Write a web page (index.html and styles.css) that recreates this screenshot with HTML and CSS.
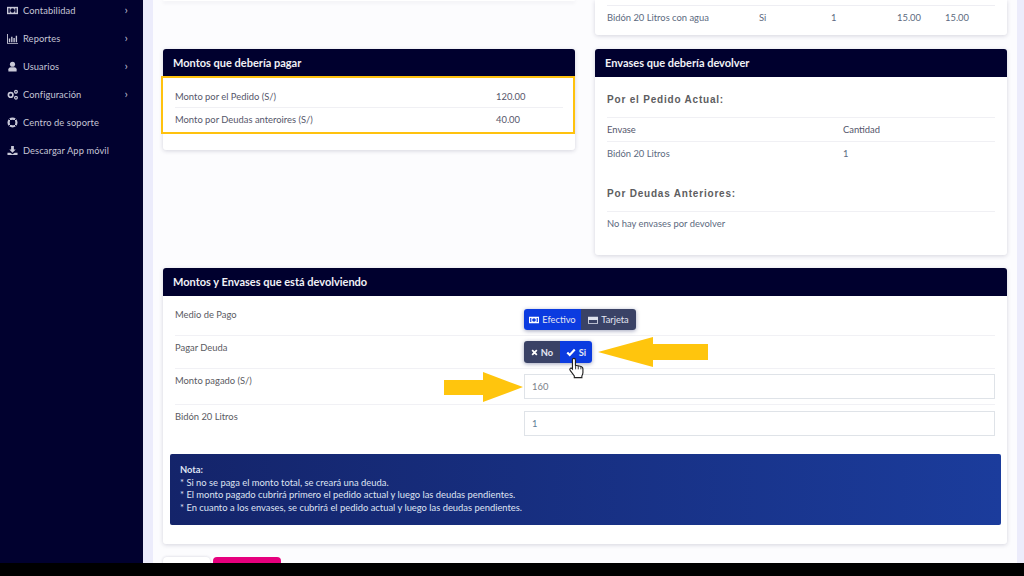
FILE: index.html
```html
<!DOCTYPE html>
<html lang="es">
<head>
<meta charset="utf-8">
<title>Pago de pedido</title>
<link rel="stylesheet" href="styles.css">
</head>
<body>
<div class="screen">
  <aside class="sidebar">
    <a class="nav-item"><svg class="nav-icon" viewBox="0 0 12 12"><path d="M0 2h12v8H0z" fill="#c9c9d8"/><circle cx="6" cy="6" r="2.400" fill="#01012f"/><path d="M1.500 3.500h1.500v5H1.500zM9 3.500h1.500v5H9z" fill="#01012f"/></svg><span class="nav-label">Contabilidad</span><span class="chev">›</span></a>
    <a class="nav-item"><svg class="nav-icon" viewBox="0 0 12 12"><path d="M0 1h1v10h11v.8H0zM2 6h1.500v4H2zM4.500 4h1.500v6H4.500zM7 5.500h1.500V10H7zM9.500 3H11v7H9.500z" fill="#c9c9d8"/></svg><span class="nav-label">Reportes</span><span class="chev">›</span></a>
    <a class="nav-item"><svg class="nav-icon" viewBox="0 0 12 12"><circle cx="6" cy="3.500" r="2.800" fill="#c9c9d8"/><path d="M1.500 11.500V9c0-1.500 1.500-2.300 2.500-2.300h4c1 0 2.500.8 2.500 2.300v2.500z" fill="#c9c9d8"/></svg><span class="nav-label">Usuarios</span><span class="chev">›</span></a>
    <a class="nav-item"><svg class="nav-icon" viewBox="0 0 12 12"><circle cx="4" cy="6.500" r="2.500" fill="none" stroke="#c9c9d8" stroke-width="1.800"/><circle cx="9.800" cy="3" r="1.500" fill="none" stroke="#c9c9d8" stroke-width="1.300"/><circle cx="9.800" cy="9.500" r="1.500" fill="none" stroke="#c9c9d8" stroke-width="1.300"/></svg><span class="nav-label">Configuración</span><span class="chev">›</span></a>
    <a class="nav-item"><svg class="nav-icon" viewBox="0 0 12 12"><circle cx="6" cy="6" r="4.300" fill="none" stroke="#c9c9d8" stroke-width="2.400"/><path d="M0 6h12M6 0v12" stroke="#01012f" stroke-width="1" transform="rotate(45 6 6)"/></svg><span class="nav-label">Centro de soporte</span></a>
    <a class="nav-item"><svg class="nav-icon" viewBox="0 0 12 12"><path d="M4.500 1h3v4h2L6 8.500 2.500 5h2zM.5 8.500h3L6 10l2.500-1.500h3V11H.5z" fill="#c9c9d8"/></svg><span class="nav-label">Descargar App móvil</span></a>
  </aside>

  <main class="content">
    <div class="columns">
      <div class="column">
        <section class="card card-stub"></section>
        <section class="card card-amounts">
          <h2 class="card-title">Montos que debería pagar</h2>
          <div class="amounts">
            <div class="amount-row"><span>Monto por el Pedido (S/)</span><span class="amount-value">120.00</span></div>
            <div class="amount-row"><span>Monto por Deudas anteroires (S/)</span><span class="amount-value">40.00</span></div>
          </div>
        </section>
      </div>
      <div class="column">
        <section class="card card-order">
          <div class="order-row"><span>Bidón 20 Litros con agua</span><span>Si</span><span>1</span><span>15.00</span><span>15.00</span></div>
        </section>
        <section class="card card-returns">
          <h2 class="card-title">Envases que debería devolver</h2>
          <h3 class="sub-title first">Por el Pedido Actual:</h3>
          <div class="return-row head"><span>Envase</span><span>Cantidad</span></div>
          <div class="return-row"><span>Bidón 20 Litros</span><span>1</span></div>
          <h3 class="sub-title second">Por Deudas Anteriores:</h3>
          <div class="return-row"><span>No hay envases por devolver</span></div>
        </section>
      </div>
    </div>

    <section class="card card-form">
      <h2 class="card-title">Montos y Envases que está devolviendo</h2>
      <div class="form-row row-pay">
        <span class="form-label">Medio de Pago</span>
        <div class="btn-group">
          <span class="btn active pay-a"><svg class="btn-icon" viewBox="0 0 12 12"><path d="M0 2h12v8H0z" fill="#fff"/><circle cx="6" cy="6" r="2.200" fill="#0b3be0"/><path d="M1.400 3.500h1.400v5H1.400zM9.200 3.500h1.400v5H9.200z" fill="#0b3be0"/></svg>Efectivo</span>
          <span class="btn pay-b"><svg class="btn-icon" viewBox="0 0 12 12"><path d="M0 2h12v8.500H0zM1 6v3.500h10V6z" fill="#dfe2ee" fill-rule="evenodd"/></svg>Tarjeta</span>
        </div>
      </div>
      <div class="form-row row-debt">
        <span class="form-label">Pagar Deuda</span>
        <div class="btn-group">
          <span class="btn debt-a"><svg class="btn-icon small" viewBox="0 0 12 12"><path d="M2 2l8 8M10 2l-8 8" stroke="#fff" stroke-width="3"/></svg>No</span>
          <span class="btn active debt-b"><svg class="btn-icon" viewBox="0 0 12 12"><path d="M1.500 6.500L4.500 9.500 10.500 3" fill="none" stroke="#fff" stroke-width="2.600"/></svg>Si</span>
        </div>
      </div>
      <div class="form-row row-amount">
        <span class="form-label">Monto pagado (S/)</span>
        <div class="field">160</div>
      </div>
      <div class="form-row row-bottle">
        <span class="form-label">Bidón 20 Litros</span>
        <div class="field field-blue">1</div>
      </div>
      <div class="note">
        <strong>Nota:</strong>
        <p>* Si no se paga el monto total, se creará una deuda.</p>
        <p>* El monto pagado cubrirá primero el pedido actual y luego las deudas pendientes.</p>
        <p>* En cuanto a los envases, se cubrirá el pedido actual y luego las deudas pendientes.</p>
      </div>
    </section>

    <div class="actions">
      <span class="action action-light"></span>
      <span class="action action-pink"></span>
    </div>
  </main>

  <div class="highlight"></div>
  <svg class="arrow arrow-left" viewBox="0 0 110 30"><path d="M0 15L55 0V7H110V23H55V30z" fill="#ffc50d"/></svg>
  <svg class="arrow arrow-right" viewBox="0 0 79 30"><path d="M79 15L39 0V8H0V23H39V30z" fill="#ffc50d"/></svg>
  <svg class="hand" viewBox="0 0 18 25"><path d="M6 1.500c1 0 1.800.7 1.800 1.800v6l5.500 1.200c1.800.4 3 1.400 3 3v4.500c0 1.300-.5 2.300-1.200 3.500v2H6.500v-2L2 15.500c-.8-1-.8-2 0-2.600.8-.5 1.700-.2 2.400.6v-10.200C4.300 2.200 5 1.500 6 1.500z" fill="#fff" stroke="#222" stroke-width="1.300"/><path d="M8 9v5M11 10v4M14 11v3" stroke="#222" stroke-width="1"/></svg>
  <div class="letterbox"></div>
</div>
</body>
</html>
```
FILE: styles.css
```css
* { box-sizing: border-box; }
html, body { margin: 0; padding: 0; }
body { width: 1024px; height: 576px; overflow: hidden; font-family: "Lato", "Liberation Sans", sans-serif; font-size: 9.400px; color: #55566a; }
.screen { position: relative; width: 1024px; height: 576px; display: flex; overflow: hidden; background: #ececfb; }

.sidebar { width: 143px; flex: none; background: #01012f; display: flex; flex-direction: column; margin-top: -4px; }
.nav-item { height: 28px; flex: none; display: flex; align-items: center; padding: 0 15px 0 7px; color: #c6c6d6; font-size: 9.300px; }
.nav-icon { width: 11px; height: 11px; flex: none; margin-right: 5px; }
.nav-label { flex: 1; letter-spacing: .1px; }
.chev { font-size: 12px; line-height: 1; color: #b9b9cc; }

.content { width: 864px; margin-left: 10px; flex: none; height: 576px; background: #fcfcfe; padding: 0 10px; overflow: hidden; }
.columns { display: grid; grid-template-columns: 412px 412px; column-gap: 20px; }
.column { display: flex; flex-direction: column; gap: 14px; }
.card { background: #fff; border-radius: 3px; box-shadow: 0 1px 4px rgba(40,40,80,.18); }
.card-title { margin: 0; height: 28px; background: #00002e; color: #f1f1f6; font-size: 11px; font-weight: 700; line-height: 28px; padding-left: 10px; border-radius: 3px 3px 0 0; }

.card-stub { height: 1px; margin-bottom: 34px; border-radius: 0 0 3px 3px; }
.card-amounts { height: 101px; }
.amounts { padding: 8px 12px 0; }
.amount-row { display: flex; height: 23px; align-items: center; }
.amount-row:first-child { border-bottom: 1px solid #f0f0f4; }
.amount-value { margin-left: auto; width: 67px; }

.card-order { height: 35px; border-radius: 0 0 3px 3px; padding: 5px 12px 0; }
.order-row { display: grid; grid-template-columns: 152px 72px 66px 48px auto; border-top: 1px solid #eeeef3; height: 24px; align-items: center; color: #5c6a80; }
.card-returns { height: 206px; }
.sub-title { margin: 0 12px; font-family: "Liberation Sans", sans-serif; font-size: 10px; font-weight: 700; letter-spacing: .8px; color: #5d5d60; border-bottom: 1px solid #f0f0f4; }
.sub-title.first { padding-top: 17px; height: 41px; }
.sub-title.second { padding-top: 23px; height: 47px; }
.return-row { margin: 0 12px; display: grid; grid-template-columns: 236px auto; height: 23px; align-items: center; color: #5c6a80; }
.return-row.head { height: 24px; border-bottom: 1px solid #f0f0f4; color: #53556a; }

.card-form { margin-top: 13px; height: 276px; }
.form-row { margin: 0 12px; display: grid; grid-template-columns: 349px 471px; border-bottom: 1px solid #f1f1f5; }
.form-label { color: #5a5a62; }
.row-pay { height: 40px; }
.row-debt { height: 33px; }
.row-amount { height: 36px; }
.row-bottle { height: 37px; border-bottom: 0; }
.row-pay .form-label { padding-top: 13px; }
.row-debt .form-label, .row-amount .form-label, .row-bottle .form-label { padding-top: 6px; }
.btn-group { display: flex; align-self: start; width: max-content; border-radius: 3px; box-shadow: 0 1px 4px rgba(20,30,90,.4); overflow: hidden; }
.row-pay .btn-group { margin-top: 13px; }
.row-debt .btn-group { margin-top: 5px; }
.btn { display: flex; align-items: center; justify-content: center; background: #3a4266; color: #e4e6f2; font-size: 9.300px; height: 21px; }
.btn.active { background: #0b3be0; }
.btn-icon { width: 10px; height: 10px; margin-right: 3px; flex: none; }
.btn-icon.small { width: 7px; height: 7px; }
.pay-a { width: 57px; }
.pay-b { width: 55px; }
.debt-a { width: 36px; height: 22px; font-weight: 700; }
.debt-b { width: 32px; height: 22px; font-weight: 700; }
.field { height: 25px; margin-top: 5px; border: 1px solid #dfe3e8; padding-left: 7px; line-height: 23px; color: #7b8088; }
.row-bottle .field { margin-top: 6px; }
.field-blue { color: #5f7d95; }
.note { margin: 12px 6px 0 7px; height: 71px; padding: 10px 10px 0; border-radius: 2px; background: linear-gradient(90deg, #14246a, #1b3c9c); color: #dfe3f2; font-size: 9.400px; line-height: 12.700px; }
.note p { margin: 0; }
.note strong { display: block; }

.actions { display: flex; gap: 3px; margin-top: 13px; }
.action { height: 30px; border-radius: 4px 4px 0 0; }
.action-light { width: 47px; background: #fff; box-shadow: 0 0 3px rgba(40,40,80,.2); }
.action-pink { width: 68px; background: #e6007e; }

.highlight { position: absolute; left: 161px; top: 76px; width: 414px; height: 58px; border: 2.500px solid #ffc20e; }
.arrow { position: absolute; }
.arrow-left { left: 598px; top: 337px; width: 110px; height: 30px; }
.arrow-right { left: 444px; top: 372px; width: 79px; height: 30px; }
.hand { position: absolute; left: 567px; top: 357px; width: 19px; height: 22px; }
.letterbox { position: absolute; left: 0; right: 0; top: 563px; height: 13px; background: #000; }
```
